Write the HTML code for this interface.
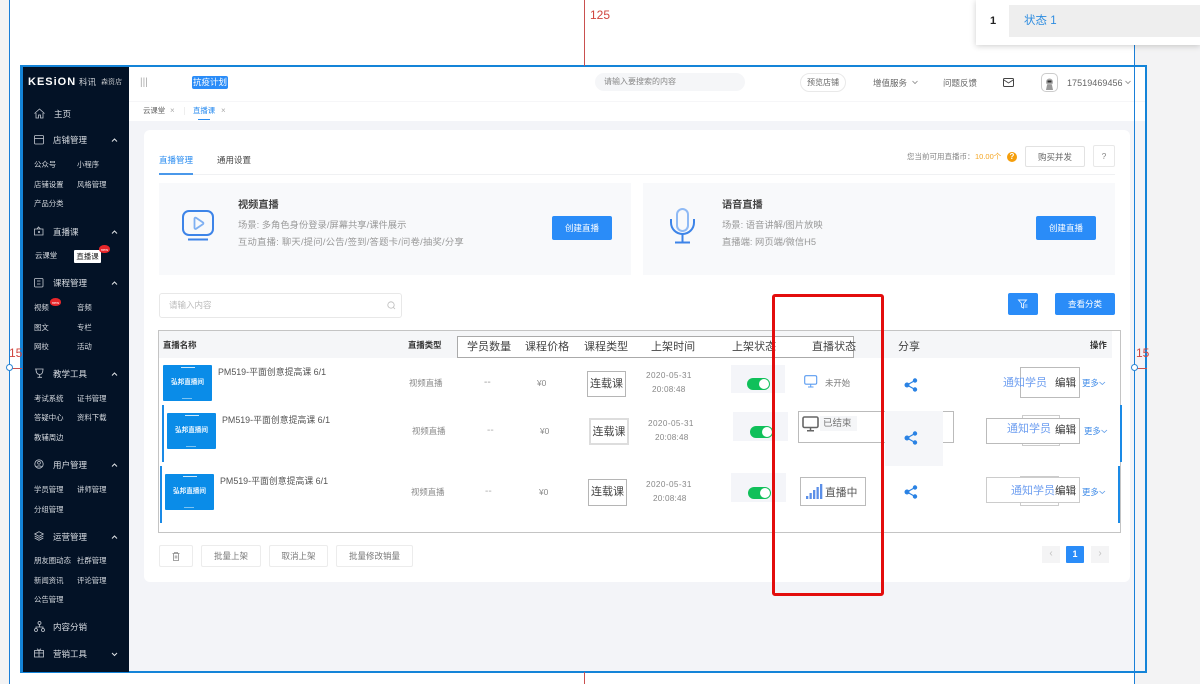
<!DOCTYPE html>
<html lang="zh-CN">
<head>
<meta charset="utf-8">
<title>直播课</title>
<style>
html,body{margin:0;padding:0;width:1200px;height:684px;overflow:hidden;background:#f3f3f4;font-family:"Liberation Sans","Noto Sans CJK SC",sans-serif;}
.a{position:absolute;box-sizing:border-box;}
.t{position:absolute;white-space:nowrap;line-height:12px;height:12px;}
#board{position:absolute;left:10px;top:0;width:1124px;height:684px;background:#fff;}
#wrap{position:absolute;left:0;top:0;width:1200px;height:684px;filter:blur(.3px);}
.side{font-size:8.5px;color:#d9dde3;}
.sm{font-size:7.4px;color:#d5d9df;}
.hd{font-size:11px;color:#444;letter-spacing:.05px;}
.bold{font-weight:700;color:#333;font-size:8.4px;}
.desc{font-size:9.3px;color:#999;}
.btn{position:absolute;box-sizing:border-box;background:#2a8cf8;color:#fff;font-size:8.5px;text-align:center;border-radius:2px;}
.wb{position:absolute;box-sizing:border-box;background:#fff;border:1px solid #ececec;border-radius:2px;color:#777;font-size:8.5px;text-align:center;line-height:20px;}
.thumb{position:absolute;width:49px;height:36px;background:#0a8ce8;border-radius:1px;color:#e8f5ff;font-size:6.6px;font-weight:700;text-align:center;line-height:36px;}
.thumb:before{content:"";position:absolute;left:18px;top:2px;width:14px;height:1px;background:#cfe9fb;}
.thumb:after{content:"";position:absolute;left:19px;top:33px;width:10px;height:1px;background:#7cc3f2;}
.title{font-size:8.9px;color:#555;}
.cell{font-size:8.4px;color:#888;}
.dash{font-size:10px;color:#999;}
.date{font-size:8.2px;color:#888;letter-spacing:.4px;}
.time{font-size:8.2px;color:#888;letter-spacing:.2px;}
.kind{position:absolute;box-sizing:border-box;background:#fff;border:1px solid #b5b5b5;font-size:11px;color:#444;text-align:center;}
.swbg{position:absolute;background:#f4f5f9;}
.sw{position:absolute;width:23px;height:12px;border-radius:6px;background:#10c05a;}
.sw:after{content:"";position:absolute;right:1px;top:1px;width:10px;height:10px;border-radius:50%;background:#fff;}
.box{position:absolute;box-sizing:border-box;border:1px solid #bbb;}
.blue{color:#6f9ff0;font-size:11px;}
.ed{color:#333;font-size:10.5px;}
.more{color:#3f8be8;font-size:8.4px;}
.bar{position:absolute;width:2px;height:57px;background:#1a8ae6;}
.hot{position:absolute;width:11px;height:8px;border-radius:50% 50% 45% 45%;background:#e8262a;color:#fff;font-size:4px;line-height:9px;text-align:center;}
svg{position:absolute;overflow:visible;}
</style>
</head>
<body>
<div id="wrap">
<div id="board"></div>

<!-- frame -->
<div class="a" style="left:20px;top:65px;width:1127px;height:608px;border:2px solid #1484d8;border-left-width:3px;background:#f3f4f8;"></div>

<!-- guides -->
<div class="a" style="left:9px;top:0;width:1px;height:684px;background:#1a7fd8;"></div>
<div class="a" style="left:1134px;top:45px;width:1px;height:639px;background:#1a7fd8;z-index:5;"></div>
<div class="a" style="left:584px;top:0;width:1px;height:66px;background:#c9504f;"></div>
<div class="a" style="left:584px;top:672px;width:1px;height:12px;background:#c9504f;"></div>
<div class="t" style="left:590px;top:9px;font-size:12px;color:#d0443e;">125</div>
<div class="t" style="left:9px;top:347px;font-size:12px;color:#d0443e;">15</div>
<div class="t" style="left:1136px;top:347px;font-size:12px;color:#d0443e;z-index:6;">15</div>
<div class="a" style="left:10px;top:368px;width:12px;height:1px;background:#c9504f;"></div>
<div class="a" style="left:1135px;top:368px;width:12px;height:1px;background:#c9504f;z-index:6;"></div>
<div class="a" style="left:6px;top:364px;width:7px;height:7px;border-radius:50%;background:#fff;border:1px solid #2a86d6;"></div>
<div class="a" style="left:1131px;top:364px;width:7px;height:7px;border-radius:50%;background:#fff;border:1px solid #2a86d6;z-index:6;"></div>

<!-- topbar -->
<div class="a" style="left:129px;top:67px;width:1016px;height:34px;background:#fff;"></div>
<div class="a" style="left:129px;top:101px;width:1016px;height:20px;background:#fff;border-top:1px solid #f6f6f8;"></div>
<div class="t" style="left:140px;top:77px;font-size:10px;color:#aaa;">|||</div>
<div class="a" style="left:192px;top:76px;width:36px;height:13px;background:#2a8cf8;border-radius:2px;color:#fff;font-size:8.5px;line-height:13px;text-align:center;">抗疫计划</div>
<div class="a" style="left:595px;top:73px;width:150px;height:18px;border-radius:9px;background:#f5f6f8;"></div>
<div class="t" style="left:604px;top:76px;font-size:8px;color:#888;">请输入要搜索的内容</div>
<div class="a" style="left:800px;top:73px;width:46px;height:19px;border-radius:10px;border:1px solid #e9e9e9;color:#666;font-size:8px;line-height:17px;text-align:center;">预览店铺</div>
<div class="t" style="left:873px;top:77px;font-size:8.5px;color:#666;">增值服务</div>
<svg style="left:912px;top:80px;" width="6" height="5"><path d="M.5 1l2.5 2.5L5.5 1" fill="none" stroke="#888" stroke-width=".8"/></svg>
<div class="t" style="left:943px;top:77px;font-size:8.5px;color:#666;">问题反馈</div>
<svg style="left:1003px;top:78px;" width="11" height="9"><rect x=".5" y=".5" width="10" height="8" rx="1" fill="none" stroke="#444" stroke-width="1"/><path d="M1 2l4.5 3L10 2" fill="none" stroke="#444" stroke-width=".9"/></svg>
<div class="a" style="left:1041px;top:73px;width:17px;height:19px;border-radius:5px;background:#fff;border:1px solid #ccc;"></div>
<svg style="left:1044px;top:77px;" width="11" height="13"><circle cx="5.5" cy="5" r="3.5" fill="#aaa"/><rect x="3.5" y="3.5" width="4" height="2" fill="#333"/><path d="M2 13l1-5h5l1 5z" fill="#999"/></svg>
<div class="t" style="left:1067px;top:77px;font-size:9px;color:#666;width:56px;letter-spacing:.05px;">17519469456</div>
<svg style="left:1125px;top:80px;" width="6" height="5"><path d="M.5 1l2.5 2.5L5.5 1" fill="none" stroke="#888" stroke-width=".8"/></svg>

<!-- tabs -->
<div class="t" style="left:143px;top:105px;font-size:7.4px;color:#666;">云课堂</div>
<div class="t" style="left:170px;top:105px;font-size:8px;color:#aaa;">×</div>
<div class="a" style="left:184px;top:107px;width:1px;height:8px;background:#eee;"></div>
<div class="t" style="left:193px;top:105px;font-size:7.4px;color:#2a8cf0;">直播课</div>
<div class="t" style="left:221px;top:105px;font-size:8px;color:#aaa;">×</div>
<div class="a" style="left:198px;top:119px;width:12px;height:1px;background:#2a8cf0;"></div>

<!-- card -->
<div class="a" style="left:144px;top:130px;width:986px;height:452px;background:#fff;border-radius:6px;"></div>
<div class="t" style="left:159px;top:154px;font-size:8.5px;color:#2a8cf0;">直播管理</div>
<div class="t" style="left:217px;top:154px;font-size:8.5px;color:#444;">通用设置</div>
<div class="a" style="left:159px;top:174px;width:956px;height:1px;background:#f0f1f3;"></div>
<div class="a" style="left:159px;top:173px;width:34px;height:1.5px;background:#4a98ea;"></div>
<div class="t" style="left:907px;top:151px;font-size:7.5px;color:#888;">您当前可用直播币：</div>
<div class="t" style="left:975px;top:151px;font-size:7.5px;color:#f5a623;">10.00个</div>
<div class="a" style="left:1007px;top:152px;width:10px;height:10px;border-radius:50%;background:#f59e0b;color:#fff;font-size:8px;line-height:10px;text-align:center;font-weight:700;">?</div>
<div class="wb" style="left:1025px;top:146px;width:60px;height:21px;color:#666;border-color:#e2e2e2;">购买并发</div>
<div class="wb" style="left:1093px;top:145px;width:22px;height:22px;color:#888;line-height:20px;border-color:#e8e8e8;">?</div>

<!-- feature boxes -->
<div class="a" style="left:159px;top:183px;width:472px;height:92px;background:#f8f9fb;"></div>
<div class="a" style="left:643px;top:183px;width:472px;height:92px;background:#f8f9fb;"></div>
<svg style="left:182px;top:209px;" width="33" height="33">
<rect x="1" y="2" width="30" height="24" rx="6" fill="none" stroke="#3d84e8" stroke-width="2"/>
<path d="M12.5 9.5v9.5a1 1 0 0 0 1.5.8l7-4.700a1 1 0 0 0 0-1.600l-7-4.700a1 1 0 0 0-1.500.7z" fill="none" stroke="#7fb0f2" stroke-width="1.800"/>
<rect x="6" y="29.500" width="20" height="2" fill="#3d84e8"/>
</svg>
<svg style="left:670px;top:208px;" width="25" height="36">
<rect x="7" y="1" width="11" height="22" rx="5.500" fill="none" stroke="#8fbaf5" stroke-width="2"/>
<path d="M1 11v3.500a11.500 11.500 0 0 0 23 0V11" fill="none" stroke="#3d84e8" stroke-width="2"/>
<path d="M12.500 26v8M5 34.500h15" fill="none" stroke="#3d84e8" stroke-width="2"/>
</svg>
<div class="t" style="left:238px;top:200px;font-size:10.2px;color:#444;font-weight:700;">视频直播</div>
<div class="t desc" style="left:238px;top:219px;">场景: 多角色身份登录/屏幕共享/课件展示</div>
<div class="t desc" style="left:238px;top:236px;letter-spacing:.25px;">互动直播: 聊天/提问/公告/签到/答题卡/问卷/抽奖/分享</div>
<div class="btn" style="left:552px;top:216px;width:60px;height:24px;line-height:24px;">创建直播</div>
<div class="t" style="left:722px;top:200px;font-size:10.2px;color:#444;font-weight:700;">语音直播</div>
<div class="t desc" style="left:722px;top:219px;">场景: 语音讲解/图片放映</div>
<div class="t desc" style="left:722px;top:236px;">直播端: 网页端/微信H5</div>
<div class="btn" style="left:1036px;top:216px;width:60px;height:24px;line-height:24px;">创建直播</div>

<!-- search -->
<div class="a" style="left:159px;top:293px;width:243px;height:25px;border:1px solid #e8e8e8;border-radius:3px;background:#fff;"></div>
<div class="t" style="left:169px;top:299px;font-size:8.5px;color:#bbb;">请输入内容</div>
<svg style="left:387px;top:301px;" width="9" height="9"><circle cx="4" cy="4" r="3.2" fill="none" stroke="#bbb" stroke-width=".8"/><path d="M6.5 6.5L8 8" stroke="#bbb" stroke-width=".8"/></svg>
<div class="btn" style="left:1008px;top:293px;width:30px;height:22px;"></div>
<svg style="left:1018px;top:299px;" width="10" height="10"><path d="M.5 1h8L5.5 4.500V9L3.500 8V4.500z" fill="none" stroke="#e6f2ff" stroke-width=".9"/><path d="M6.500 6h3M6.500 8h3" stroke="#e6f2ff" stroke-width=".8"/></svg>
<div class="btn" style="left:1055px;top:293px;width:60px;height:22px;line-height:22px;">查看分类</div>

<!-- table -->
<div class="a" style="left:158px;top:330px;width:963px;height:203px;border:1px solid #c4c4c4;background:#fff;"></div>
<div class="a" style="left:159px;top:331px;width:953px;height:27px;background:#f5f6f8;"></div>
<div class="a" style="left:457px;top:336px;width:397px;height:22px;border:1px solid #aaa;background:#fff;"></div>
<div class="t bold" style="left:163px;top:339px;">直播名称</div>
<div class="t bold" style="left:408px;top:339px;">直播类型</div>
<div class="t hd" style="left:467px;top:341px;">学员数量</div>
<div class="t hd" style="left:525px;top:341px;">课程价格</div>
<div class="t hd" style="left:584px;top:341px;">课程类型</div>
<div class="t hd" style="left:651px;top:341px;">上架时间</div>
<div class="t hd" style="left:732px;top:341px;">上架状态</div>
<div class="t hd" style="left:812px;top:341px;">直播状态</div>
<div class="t hd" style="left:898px;top:341px;">分享</div>
<div class="t bold" style="left:1090px;top:339px;">操作</div>

<!-- row 1 -->
<div class="thumb" style="left:163px;top:365px;">弘邦直播间</div>
<div class="t title" style="left:218px;top:366px;">PM519-平面创意提高课 6/1</div>
<div class="t cell" style="left:409px;top:377px;">视频直播</div>
<div class="t dash" style="left:484px;top:377px;">--</div>
<div class="t cell" style="left:537px;top:377px;">¥0</div>
<div class="kind" style="left:587px;top:371px;width:39px;height:26px;line-height:24px;">连载课</div>
<div class="t date" style="left:646px;top:370px;">2020-05-31</div>
<div class="t time" style="left:652px;top:384px;">20:08:48</div>
<div class="swbg" style="left:731px;top:365px;width:54px;height:28px;"></div>
<div class="sw" style="left:747px;top:378px;"></div>
<svg style="left:804px;top:375px;" width="14" height="13"><rect x=".7" y=".7" width="12" height="8.5" rx="1.5" fill="none" stroke="#5b9cf0" stroke-width="1.100"/><path d="M6.700 9.500v2M4 12h5.500" stroke="#5b9cf0" stroke-width="1"/></svg>
<div class="t cell" style="left:825px;top:377px;color:#777;">未开始</div>
<div class="box" style="left:1020px;top:367px;width:60px;height:31px;"></div>
<div class="t blue" style="left:1003px;top:377px;">通知学员</div>
<div class="t ed" style="left:1055px;top:377px;">编辑</div>
<div class="t more" style="left:1082px;top:377px;">更多</div>
<svg style="left:1099px;top:381px;" width="7" height="5"><path d="M.5 1L3.300 3.500 6 1" fill="none" stroke="#5a9ae8" stroke-width=".8"/></svg>

<!-- row 2 -->
<div class="bar" style="left:162px;top:405px;"></div>
<div class="thumb" style="left:167px;top:413px;">弘邦直播间</div>
<div class="t title" style="left:222px;top:414px;">PM519-平面创意提高课 6/1</div>
<div class="t cell" style="left:412px;top:425px;">视频直播</div>
<div class="t dash" style="left:487px;top:425px;color:#aaa;">--</div>
<div class="t cell" style="left:540px;top:425px;">¥0</div>
<div class="kind" style="left:589px;top:418px;width:40px;height:27px;line-height:24px;border:2px solid #ddd;">连载课</div>
<div class="t date" style="left:648px;top:418px;">2020-05-31</div>
<div class="t time" style="left:655px;top:432px;">20:08:48</div>
<div class="swbg" style="left:733px;top:412px;width:55px;height:29px;"></div>
<div class="sw" style="left:750px;top:426px;"></div>
<div class="box" style="left:798px;top:411px;width:156px;height:32px;"></div>
<div class="a" style="left:885px;top:411px;width:58px;height:55px;background:#f5f6f9;"></div>
<div class="a" style="left:820px;top:416px;width:37px;height:15px;background:#f5f6f8;"></div>
<svg style="left:802px;top:416px;" width="18" height="16"><rect x="1" y="1" width="15" height="10.500" rx="1.500" fill="none" stroke="#666" stroke-width="1.600"/><path d="M8.500 12v2M5 14.700h7" stroke="#666" stroke-width="1.500"/></svg>
<div class="t cell" style="left:823px;top:418px;font-size:9.5px;color:#777;">已结束</div>
<div class="box" style="left:1022px;top:415px;width:38px;height:31px;border-color:#ccc;"></div>
<div class="box" style="left:986px;top:418px;width:94px;height:26px;background:#fff;"></div>
<div class="t blue" style="left:1007px;top:423px;">通知学员</div>
<div class="t ed" style="left:1055px;top:424px;">编辑</div>
<div class="t more" style="left:1084px;top:425px;">更多</div>
<svg style="left:1101px;top:429px;" width="7" height="5"><path d="M.5 1L3.300 3.500 6 1" fill="none" stroke="#5a9ae8" stroke-width=".8"/></svg>
<div class="bar" style="left:1120px;top:405px;"></div>

<!-- row 3 -->
<div class="bar" style="left:160px;top:466px;"></div>
<div class="thumb" style="left:165px;top:474px;">弘邦直播间</div>
<div class="t title" style="left:220px;top:475px;">PM519-平面创意提高课 6/1</div>
<div class="t cell" style="left:411px;top:486px;">视频直播</div>
<div class="t dash" style="left:485px;top:486px;color:#aaa;">--</div>
<div class="t cell" style="left:539px;top:486px;">¥0</div>
<div class="kind" style="left:588px;top:479px;width:39px;height:27px;line-height:25px;">连载课</div>
<div class="t date" style="left:646px;top:479px;">2020-05-31</div>
<div class="t time" style="left:653px;top:493px;">20:08:48</div>
<div class="swbg" style="left:731px;top:473px;width:55px;height:29px;"></div>
<div class="sw" style="left:748px;top:487px;"></div>
<div class="box" style="left:800px;top:477px;width:66px;height:29px;"></div>
<svg style="left:806px;top:483px;" width="18" height="17"><rect x="0" y="13" width="2.300" height="3" fill="#5b8fe8"/><rect x="3.500" y="10" width="2.300" height="6" fill="#5b8fe8"/><rect x="7" y="7" width="2.300" height="9" fill="#5b8fe8"/><rect x="10.500" y="4" width="2.300" height="12" fill="#5b8fe8"/><rect x="14" y="1" width="2.300" height="15" fill="#5b8fe8"/></svg>
<div class="t" style="left:825px;top:487px;font-size:10.8px;color:#555;">直播中</div>
<div class="box" style="left:1020px;top:476px;width:39px;height:30px;border-color:#ccc;"></div>
<div class="box" style="left:986px;top:477px;width:94px;height:26px;background:#fff;border-color:#ccc;border-width:1.5px;"></div>
<div class="t blue" style="left:1011px;top:485px;">通知学员</div>
<div class="t ed" style="left:1055px;top:485px;">编辑</div>
<div class="t more" style="left:1082px;top:486px;">更多</div>
<svg style="left:1099px;top:490px;" width="7" height="5"><path d="M.5 1L3.300 3.500 6 1" fill="none" stroke="#5a9ae8" stroke-width=".8"/></svg>
<div class="bar" style="left:1118px;top:466px;"></div>

<!-- share icons -->
<svg style="left:904px;top:378px;" width="14" height="14"><path d="M11 2.500L3 7l8 4.500" fill="none" stroke="#2a82e4" stroke-width="1.200"/><circle cx="11" cy="2.500" r="2.200" fill="#2a82e4"/><circle cx="3" cy="7" r="2.500" fill="#2a82e4"/><circle cx="11" cy="11.500" r="2.200" fill="#2a82e4"/></svg>
<svg style="left:904px;top:431px;" width="14" height="14"><path d="M11 2.500L3 7l8 4.500" fill="none" stroke="#2a82e4" stroke-width="1.200"/><circle cx="11" cy="2.500" r="2.200" fill="#2a82e4"/><circle cx="3" cy="7" r="2.500" fill="#2a82e4"/><circle cx="11" cy="11.500" r="2.200" fill="#2a82e4"/></svg>
<svg style="left:904px;top:485px;" width="14" height="14"><path d="M11 2.500L3 7l8 4.500" fill="none" stroke="#2a82e4" stroke-width="1.200"/><circle cx="11" cy="2.500" r="2.200" fill="#2a82e4"/><circle cx="3" cy="7" r="2.500" fill="#2a82e4"/><circle cx="11" cy="11.500" r="2.200" fill="#2a82e4"/></svg>

<!-- bottom -->
<div class="wb" style="left:159px;top:545px;width:34px;height:22px;"></div>
<svg style="left:172px;top:552px;" width="8" height="9"><path d="M.5 1.500h7M2.500 1.500V.5h3v1M1.500 1.500v7h5v-7M3.200 3.500v3M4.800 3.500v3" fill="none" stroke="#888" stroke-width=".8"/></svg>
<div class="wb" style="left:201px;top:545px;width:60px;height:22px;">批量上架</div>
<div class="wb" style="left:269px;top:545px;width:59px;height:22px;">取消上架</div>
<div class="wb" style="left:336px;top:545px;width:77px;height:22px;">批量修改销量</div>
<div class="a" style="left:1042px;top:546px;width:18px;height:17px;background:#f4f4f5;color:#c0c0c0;font-size:10px;line-height:16px;text-align:center;">‹</div>
<div class="a" style="left:1066px;top:546px;width:18px;height:17px;background:#2a8cf8;color:#fff;font-size:9px;font-weight:700;line-height:17px;text-align:center;border-radius:1px;">1</div>
<div class="a" style="left:1091px;top:546px;width:18px;height:17px;background:#f4f4f5;color:#c0c0c0;font-size:10px;line-height:16px;text-align:center;">›</div>

<!-- red highlight -->
<div class="a" style="left:772px;top:294px;width:112px;height:302px;border:3px solid #e30d0d;border-radius:3px;z-index:6;"></div>

<!-- sidebar -->
<div class="a" style="left:23px;top:67px;width:106px;height:605px;background:#031226;"></div>
<div class="t" style="left:28px;top:76px;font-size:11px;font-weight:700;color:#fff;letter-spacing:1px;">KESiON</div>
<div class="t" style="left:79px;top:76px;font-size:8.5px;color:#cfd3d8;">科讯</div>
<div class="t" style="left:101px;top:76px;font-size:7px;color:#e8e8e8;font-family:'Liberation Serif','Noto Serif CJK SC',serif;">森资店</div>

<svg style="left:34px;top:108px;" width="11" height="11"><path d="M.5 5.500L5.500 1l5 4.500M2 5v5h2.500V7h2v3H9V5" fill="none" stroke="#c5cad2" stroke-width=".8"/></svg>
<div class="t side" style="left:54px;top:108px;">主页</div>
<svg style="left:34px;top:135px;" width="11" height="10"><rect x=".5" y=".5" width="9" height="8.500" rx="1" fill="none" stroke="#c5cad2" stroke-width=".8"/><path d="M.5 3.500h9" stroke="#c5cad2" stroke-width=".8"/></svg>
<div class="t side" style="left:53px;top:134px;">店铺管理</div>
<svg style="left:111px;top:138px;" width="7" height="5"><path d="M1 3.500L3.500 1 6 3.500" fill="none" stroke="#dfe2e6" stroke-width="1"/></svg>
<div class="t sm" style="left:34px;top:159px;">公众号</div>
<div class="t sm" style="left:77px;top:159px;">小程序</div>
<div class="t sm" style="left:34px;top:179px;">店铺设置</div>
<div class="t sm" style="left:77px;top:179px;">风格管理</div>
<div class="t sm" style="left:34px;top:198px;">产品分类</div>

<svg style="left:34px;top:226px;" width="10" height="10"><path d="M.5 3h8.500v6H.5zM3 3l1.500-2L6.500 3" fill="none" stroke="#c5cad2" stroke-width=".8"/><circle cx="5" cy="6" r="1" fill="#c5cad2"/></svg>
<div class="t side" style="left:53px;top:225.5px;">直播课</div>
<svg style="left:111px;top:230px;" width="7" height="5"><path d="M1 3.500L3.500 1 6 3.500" fill="none" stroke="#dfe2e6" stroke-width="1"/></svg>
<div class="t sm" style="left:35px;top:250px;">云课堂</div>
<div class="a" style="left:74px;top:250px;width:27px;height:13px;background:#fff;border-radius:1px;color:#222;font-size:7.4px;line-height:13px;text-align:center;">直播课</div>
<div class="hot" style="left:99px;top:245px;">new</div>

<svg style="left:34px;top:278px;" width="10" height="10"><rect x=".5" y=".5" width="8.500" height="8.500" rx="1" fill="none" stroke="#c5cad2" stroke-width=".8"/><path d="M3 3h3.500M3 6h3.500" stroke="#c5cad2" stroke-width=".7"/></svg>
<div class="t side" style="left:53px;top:277px;">课程管理</div>
<svg style="left:111px;top:281px;" width="7" height="5"><path d="M1 3.500L3.500 1 6 3.500" fill="none" stroke="#dfe2e6" stroke-width="1"/></svg>
<div class="t sm" style="left:34px;top:302px;">视频</div>
<div class="hot" style="left:50px;top:298px;">new</div>
<div class="t sm" style="left:77px;top:302px;">音频</div>
<div class="t sm" style="left:34px;top:322px;">图文</div>
<div class="t sm" style="left:77px;top:322px;">专栏</div>
<div class="t sm" style="left:34px;top:341px;">网校</div>
<div class="t sm" style="left:77px;top:341px;">活动</div>

<svg style="left:34px;top:368px;" width="11" height="10"><path d="M1 1h8.500M2 1c0 4 1.500 5.500 3.700 5.500S9 5 9 1M5.700 6.500V9M3.500 9.300h4.500" fill="none" stroke="#c5cad2" stroke-width=".8"/></svg>
<div class="t side" style="left:53px;top:368px;">教学工具</div>
<svg style="left:111px;top:372px;" width="7" height="5"><path d="M1 3.500L3.500 1 6 3.500" fill="none" stroke="#dfe2e6" stroke-width="1"/></svg>
<div class="t sm" style="left:34px;top:393px;">考试系统</div>
<div class="t sm" style="left:77px;top:393px;">证书管理</div>
<div class="t sm" style="left:34px;top:412px;">答疑中心</div>
<div class="t sm" style="left:77px;top:412px;">资料下载</div>
<div class="t sm" style="left:34px;top:432px;">教辅周边</div>

<svg style="left:34px;top:459px;" width="10" height="10"><circle cx="5" cy="5" r="4.200" fill="none" stroke="#c5cad2" stroke-width=".8"/><circle cx="5" cy="3.800" r="1.400" fill="none" stroke="#c5cad2" stroke-width=".7"/><path d="M2.500 8c.5-1.500 4.500-1.500 5 0" fill="none" stroke="#c5cad2" stroke-width=".7"/></svg>
<div class="t side" style="left:53px;top:459px;">用户管理</div>
<svg style="left:111px;top:463px;" width="7" height="5"><path d="M1 3.500L3.500 1 6 3.500" fill="none" stroke="#dfe2e6" stroke-width="1"/></svg>
<div class="t sm" style="left:34px;top:484px;">学员管理</div>
<div class="t sm" style="left:77px;top:484px;">讲师管理</div>
<div class="t sm" style="left:34px;top:504px;">分组管理</div>

<svg style="left:34px;top:531px;" width="10" height="10"><path d="M5 .7L9.300 3 5 5.300.7 3zM.7 5L5 7.300 9.300 5M.7 7L5 9.300 9.300 7" fill="none" stroke="#c5cad2" stroke-width=".8"/></svg>
<div class="t side" style="left:53px;top:531px;">运营管理</div>
<svg style="left:111px;top:535px;" width="7" height="5"><path d="M1 3.500L3.500 1 6 3.500" fill="none" stroke="#dfe2e6" stroke-width="1"/></svg>
<div class="t sm" style="left:34px;top:555px;">朋友圈动态</div>
<div class="t sm" style="left:77px;top:555px;">社群管理</div>
<div class="t sm" style="left:34px;top:575px;">新闻资讯</div>
<div class="t sm" style="left:77px;top:575px;">评论管理</div>
<div class="t sm" style="left:34px;top:594px;">公告管理</div>

<svg style="left:34px;top:621px;" width="11" height="11"><circle cx="5.500" cy="2" r="1.500" fill="none" stroke="#c5cad2" stroke-width=".8"/><circle cx="2" cy="9" r="1.500" fill="none" stroke="#c5cad2" stroke-width=".8"/><circle cx="9" cy="9" r="1.500" fill="none" stroke="#c5cad2" stroke-width=".8"/><path d="M5.500 3.500V6M2 7.500V6h7v1.500" fill="none" stroke="#c5cad2" stroke-width=".8"/></svg>
<div class="t side" style="left:53px;top:621px;">内容分销</div>
<svg style="left:34px;top:648px;" width="11" height="10"><rect x=".5" y="2.500" width="9" height="6.500" fill="none" stroke="#c5cad2" stroke-width=".8"/><path d="M.5 5h9M5 2.500V9M3 .7L5 2.500 7 .7" fill="none" stroke="#c5cad2" stroke-width=".8"/></svg>
<div class="t side" style="left:53px;top:648px;">营销工具</div>
<svg style="left:111px;top:652px;" width="7" height="5"><path d="M1 1L3.500 3.500 6 1" fill="none" stroke="#dfe2e6" stroke-width="1"/></svg>

<!-- popup top right -->
<div class="a" style="left:976px;top:0;width:224px;height:45px;background:#fff;box-shadow:0 1px 6px rgba(0,0,0,.2);z-index:7;"></div>
<div class="a" style="left:1009px;top:5px;width:191px;height:32px;background:#eeeeee;z-index:7;"></div>
<div class="t" style="left:990px;top:15px;font-size:11px;font-weight:700;color:#222;z-index:8;">1</div>
<div class="t" style="left:1024px;top:15px;font-size:11.5px;color:#2d8ce0;z-index:8;">状态 1</div>
</div>
</body>
</html>
